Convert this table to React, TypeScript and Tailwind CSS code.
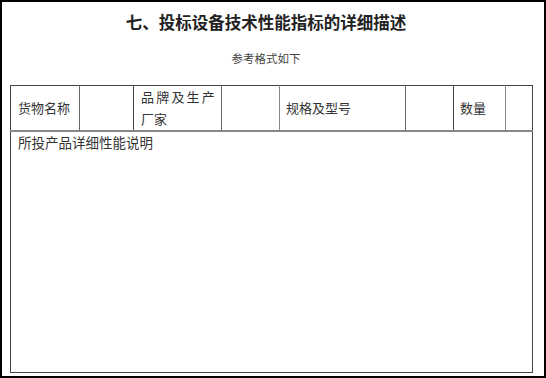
const cjk = { fontFamily: '"Noto Sans CJK SC", "Noto Sans", sans-serif' };

const cols = [69, 54, 88, 58, 126, 48, 52, 27];

export default function App() {
  return (
    <div
      className="flex h-[378px] w-[546px] flex-col border-2 border-black bg-white text-[#333]"
      style={cjk}
    >
      <h1 className="mt-[8px] ml-[-14px] text-center text-[16.5px] font-semibold leading-[24px] text-[#222]">
        七、投标设备技术性能指标的详细描述
      </h1>
      <p className="mt-[16px] ml-[-14px] text-center text-[11.5px] leading-[16px] text-[#444]">
        参考格式如下
      </p>

      <table className="mt-[19px] ml-[8px] w-[523px] table-fixed border-collapse border border-[#444] text-[13px]">
        <colgroup>
          {cols.map((w, i) => (
            <col key={i} style={{ width: w }} />
          ))}
        </colgroup>
        <tbody>
          <tr className="h-[44px] border-b-[2px] border-[#888]">
            <td className="border-r border-[#666] pl-[7px]">货物名称</td>
            <td className="border-r border-[#444]"></td>
            <td className="border-r border-[#666] pl-[7px] leading-[22px]">
              <div className="whitespace-nowrap tracking-[2.2px]">品牌及生产</div>
              <div>厂家</div>
            </td>
            <td className="border-r border-[#888]"></td>
            <td className="border-r border-[#666] pl-[6px]">规格及型号</td>
            <td className="border-r border-[#444]"></td>
            <td className="border-r border-[#888] pl-[6px]">数量</td>
            <td></td>
          </tr>
          <tr className="h-[241px]">
            <td colSpan={8} className="align-top pl-[7px] pt-0 text-[13.5px] leading-[20px]">
              所投产品详细性能说明
            </td>
          </tr>
        </tbody>
      </table>
    </div>
  );
}
